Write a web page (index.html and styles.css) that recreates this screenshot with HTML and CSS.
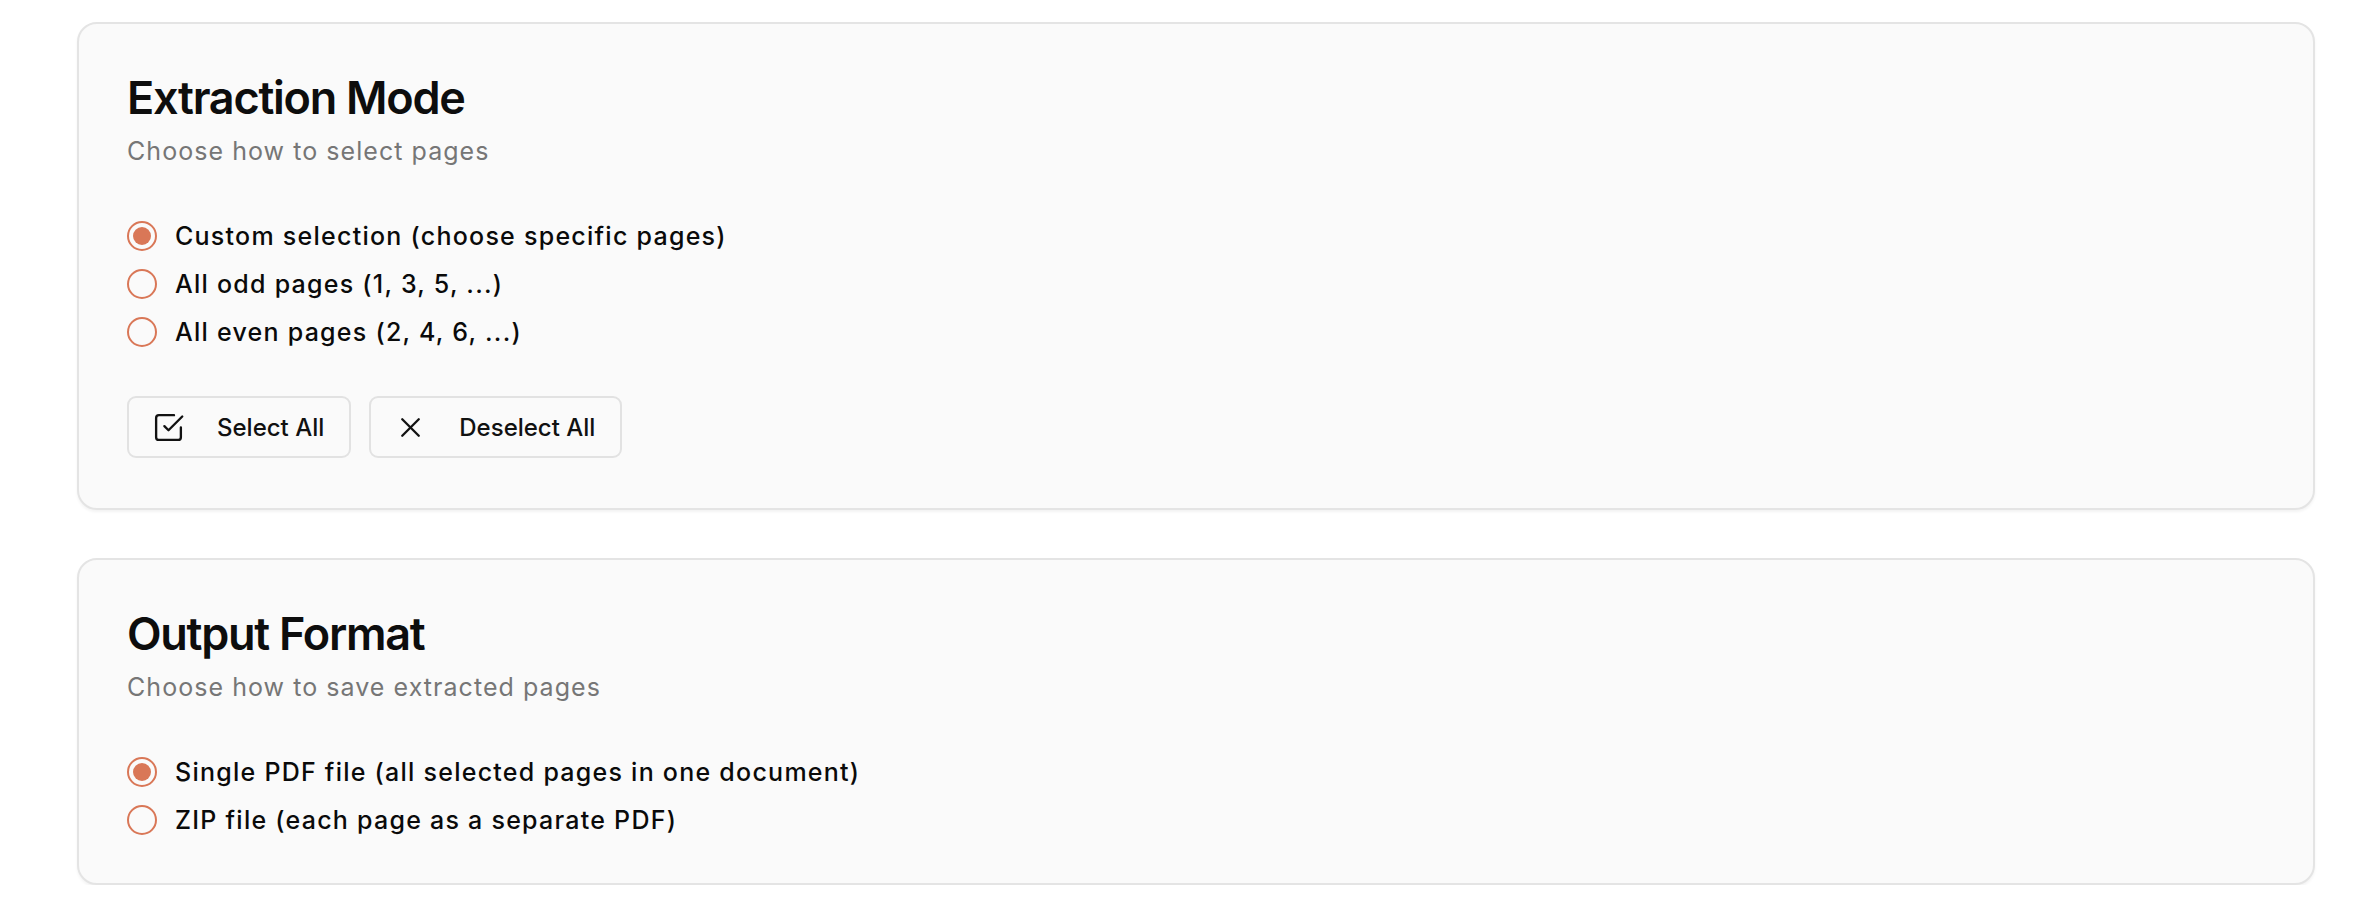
FILE: index.html
```html
<!DOCTYPE html>
<html lang="en">
<head>
<meta charset="utf-8">
<title>Extract Pages</title>
<link rel="stylesheet" href="styles.css">
</head>
<body>
<main class="page">
  <section class="card">
    <h2 class="card-title">Extraction Mode</h2>
    <p class="card-desc">Choose how to select pages</p>
    <div class="radio-group">
      <label class="radio-row"><span class="radio checked"><span class="dot"></span></span><span class="radio-label">Custom selection (choose specific pages)</span></label>
      <label class="radio-row"><span class="radio"></span><span class="radio-label">All odd pages (1, 3, 5, ...)</span></label>
      <label class="radio-row"><span class="radio"></span><span class="radio-label">All even pages (2, 4, 6, ...)</span></label>
    </div>
    <div class="actions">
      <button class="btn" type="button">
        <svg class="icon" viewBox="0 0 24 24" fill="none" stroke="currentColor" stroke-width="1.7" stroke-linecap="round" stroke-linejoin="round"><path d="m9 11 3 3L22 4"/><path d="M21 12v7a2 2 0 0 1-2 2H5a2 2 0 0 1-2-2V5a2 2 0 0 1 2-2h11"/></svg>
        <span>Select All</span>
      </button>
      <button class="btn" type="button">
        <svg class="icon" viewBox="0 0 24 24" fill="none" stroke="currentColor" stroke-width="1.7" stroke-linecap="round" stroke-linejoin="round"><path d="M18 6 6 18"/><path d="m6 6 12 12"/></svg>
        <span>Deselect All</span>
      </button>
    </div>
  </section>
  <section class="card card-last">
    <h2 class="card-title">Output Format</h2>
    <p class="card-desc">Choose how to save extracted pages</p>
    <div class="radio-group">
      <label class="radio-row"><span class="radio checked"><span class="dot"></span></span><span class="radio-label">Single PDF file (all selected pages in one document)</span></label>
      <label class="radio-row"><span class="radio"></span><span class="radio-label">ZIP file (each page as a separate PDF)</span></label>
    </div>
  </section>
</main>
</body>
</html>
```

FILE: styles.css
```css
* { box-sizing: border-box; }
html, body { margin: 0; padding: 0; background: #ffffff; }
body {
  font-family: Inter, "Noto Sans", "Liberation Sans", sans-serif;
  color: #0f0f0f;
}
.page {
  display: flex;
  flex-direction: column;
  gap: 48px;
  padding: 22px 53px 0 77px;
}
.card {
  background: #fafafa;
  border: 2px solid #e4e4e4;
  border-radius: 20px;
  box-shadow: 0 2px 3px rgba(0, 0, 0, 0.05);
  padding: 47px 48px 50px 48px;
}
.card-last { padding-bottom: 45px; }
.card-title {
  margin: 0;
  font-size: 45px;
  line-height: 54px;
  font-weight: 600;
  letter-spacing: -0.028em;
  color: #0d0d0d;
}
.card-desc {
  margin: 8px 0 0 0;
  font-size: 25px;
  line-height: 36px;
  letter-spacing: 0.042em;
  color: #767676;
}
.radio-group {
  margin-top: 49px;
  display: flex;
  flex-direction: column;
  gap: 12px;
}
.radio-row {
  display: flex;
  align-items: center;
  gap: 18px;
  height: 36px;
}
.radio {
  width: 30px;
  height: 30px;
  border-radius: 50%;
  border: 2px solid #d97757;
  display: flex;
  align-items: center;
  justify-content: center;
  flex: none;
}
.dot {
  width: 18px;
  height: 18px;
  border-radius: 50%;
  background: #d97757;
}
.radio-label {
  font-size: 25px;
  line-height: 36px;
  font-weight: 450;
  letter-spacing: 0.05em;
  color: #0a0a0a;
}
.actions {
  margin-top: 46px;
  display: flex;
  gap: 18px;
}
.btn {
  display: flex;
  align-items: center;
  gap: 32px;
  height: 62px;
  padding: 0 25px 0 23px;
  background: transparent;
  border: 2px solid #e2e2e2;
  border-radius: 9px;
  font-family: inherit;
  font-size: 24px;
  font-weight: 500;
  color: #111111;
}
.icon {
  width: 33px;
  height: 33px;
  flex: none;
}
```
